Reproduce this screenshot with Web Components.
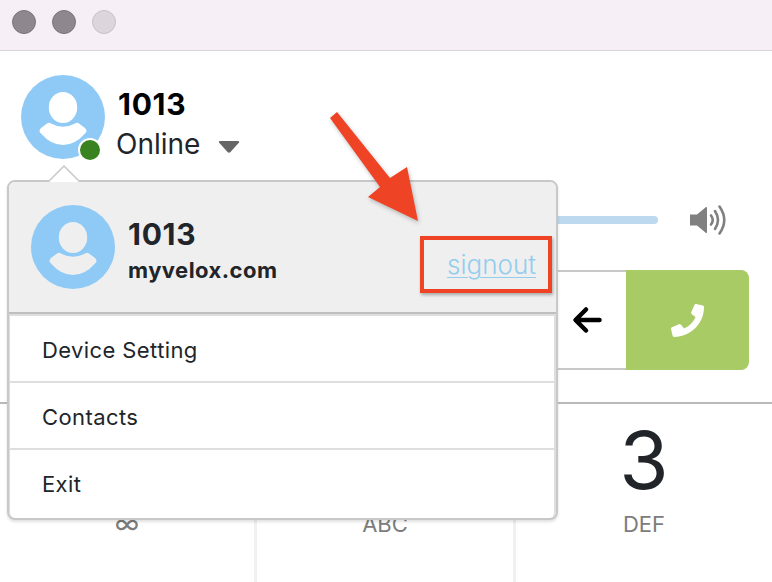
<!DOCTYPE html>
<html lang="en">
<head>
  <meta charset="UTF-8">
  <title>Softphone</title>
  <style>
    html, body { margin: 0; height: 100%; background: #fff; overflow: hidden; }
    body { font-family: Inter, "Liberation Sans", sans-serif; color: #212529; position: relative; }
  </style>
</head>
<body>
  <app-titlebar></app-titlebar>
  <app-status name="1013" state="Online"></app-status>
  <app-volume></app-volume>
  <app-dialbar></app-dialbar>
  <!-- digits 1 and 2 sit behind the open menu, only their letters show -->
  <app-keypad>
    <app-key letters="∞" big></app-key>
    <app-key letters="ABC"></app-key>
    <app-key digit="3" letters="DEF"></app-key>
  </app-keypad>
  <app-usermenu name="1013" domain="myvelox.com">
    <app-menuitem>Device Setting</app-menuitem>
    <app-menuitem>Contacts</app-menuitem>
    <app-menuitem>Exit</app-menuitem>
  </app-usermenu>
  <app-callout></app-callout>

  <script>
    const AVATAR_ICON = (bg, fg) => `
      <svg width="84" height="84" viewBox="0 0 84 84" style="display:block">
        <circle cx="42" cy="42" r="42" fill="${bg}"/>
        <ellipse cx="42" cy="32.5" rx="14.2" ry="15.5" fill="${fg}"/>
        <path d="M20 53 L26 48.5 Q28 47 30 48.5 Q42 55 54 48.5 Q56 47 58 48.5 L64 53 Q67 56 64 58.5 Q54 70 42 70 Q30 70 20 58.5 Q17 56 20 53Z" fill="${fg}"/>
      </svg>`;

    // small helper, every element here is the same: style + markup in an open root
    function define(tag, render) {
      customElements.define(tag, class extends HTMLElement {
        constructor() {
          super();
          this.attachShadow({ mode: 'open' });
        }
        connectedCallback() {
          this.shadowRoot.innerHTML = render(this);
        }
      });
    }

    define('app-titlebar', () => `
      <style>
        :host { display: flex; gap: 16px; align-items: center; box-sizing: border-box; height: 51px;
          padding: 0 0 6px 12px; background: #f6eff6; border-bottom: 1px solid #d9d5d9; }
        i { width: 22px; height: 22px; border-radius: 50%; background: #8f878e; border: 1px solid #7c757c; }
        i.off { background: #dcd6dc; border-color: #c8c3c8; }
      </style>
      <i></i><i></i><i class="off"></i>`);

    define('app-status', (el) => `
      <style>
        :host { display: flex; align-items: flex-start; gap: 13px; height: 109px; box-sizing: border-box; padding: 24px 0 0 21px; }
        .pic { position: relative; width: 84px; height: 84px; }
        .dot { position: absolute; left: 57px; top: 63px; width: 20px; height: 20px; border-radius: 50%;
          background: #38821f; border: 2px solid #fff; }
        .name { font-size: 30px; font-weight: 700; letter-spacing: .7px; color: #000; line-height: 34px; margin-top: 12px; }
        .state { display: flex; align-items: center; gap: 18px; font-size: 28px; line-height: 34px; margin: 6px 0 0 -2px; color: #212529; }
        svg.caret { display: block; margin-top: 5px; }
      </style>
      <div class="pic">${AVATAR_ICON('#8fcaf6', '#fff')}<span class="dot"></span></div>
      <div>
        <div class="name">${el.getAttribute('name')}</div>
        <div class="state">${el.getAttribute('state')}
          <svg class="caret" width="22" height="12" viewBox="0 0 22 12"><path d="M1 1.5 Q0.5 0 2 0 H20 Q21.5 0 21 1.5 L12.5 11 Q11 12.5 9.5 11Z" fill="#666"/></svg>
        </div>
      </div>`);

    define('app-volume', () => `
      <style>
        :host { display: flex; align-items: center; height: 110px; box-sizing: border-box; padding: 10px 0 0 300px; }
        .track { width: 358px; height: 8px; border-radius: 4px; background: #bcd9ef; }
        svg { display: block; margin-left: 32px; }
      </style>
      <div class="track"></div>
      <svg width="37" height="30" viewBox="0 0 37 30">
        <path d="M0 9.5 H7 L16 2 Q17 1.5 17 3 V27 Q17 28.5 16 28 L7 20.5 H0Z" fill="#808080"/>
        <g fill="none" stroke="#808080" stroke-width="2.6" stroke-linecap="round">
          <path d="M21 10.5 Q24.5 15 21 19.5"/>
          <path d="M25 6 Q31 15 25 24"/>
          <path d="M29.5 1.5 Q39 15 29.5 28.5"/>
        </g>
      </svg>`);

    define('app-dialbar', () => `
      <style>
        :host { display: flex; height: 100px; margin: 0 23px 0 300px; }
        .input { flex: 1; display: flex; align-items: center; justify-content: flex-end; padding-right: 24px;
          border-top: 2px solid #c9c9c9; border-bottom: 2px solid #c9c9c9; }
        .call { width: 123px; display: flex; align-items: center; justify-content: center;
          background: #a9cb66; border-radius: 0 8px 8px 0; }
        svg { display: block; }
      </style>
      <div class="input">
        <svg width="30" height="28" viewBox="0 0 30 28"><path d="M27.5 14 H4 M14 3.5 L3.5 14 L14 24.5" fill="none" stroke="#000" stroke-width="4.5" stroke-linecap="round" stroke-linejoin="round"/></svg>
      </div>
      <div class="call">
        <svg width="33" height="33" viewBox="0 0 512 512"><path fill="#fff" d="M493.4 24.6l-104-24c-11.3-2.6-22.9 3.3-27.5 13.9l-48 112c-4.2 9.8-1.4 21.3 6.9 28l60.6 49.6c-36 76.7-98.9 140.5-177.2 177.2l-49.6-60.6c-6.8-8.3-18.2-11.1-28-6.9l-112 48C3.9 366.5-2 378.1.6 389.4l24 104C27.1 504.2 36.7 512 48 512c256.1 0 464-207.5 464-464 0-11.2-7.7-20.9-18.6-23.4z"/></svg>
      </div>`);

    define('app-keypad', () => `
      <style>
        :host { display: grid; grid-template-columns: 257px 259px 1fr; margin-top: 32px; height: 179px;
          border-top: 2px solid #b9b9b9; border-bottom: 4px solid #f1f1f1; }
      </style>
      <slot></slot>`);

    define('app-key', (el) => `
      <style>
        :host { display: flex; flex-direction: column; align-items: center; box-sizing: border-box; padding-top: 14px; border-right: 3px solid #f1f1f1; }
        :host(:last-child) { border-right: 0; }
        b { height: 84px; font-size: 80px; font-weight: 400; line-height: 84px; color: #212529; }
        span { font-size: ${el.hasAttribute('big') ? 26 : 22}px; line-height: 24px; color: #7c7c7c; margin-top: 10px; }
      </style>
      <b>${el.getAttribute('digit') || ''}</b><span>${el.getAttribute('letters')}</span>`);

    define('app-usermenu', (el) => `
      <style>
        :host { position: absolute; left: 7px; top: 180px; width: 551px; box-sizing: border-box;
          border: 2px solid #c8c8c8; border-radius: 8px; background: #fff; box-shadow: 0 2px 3px rgba(0,0,0,.12); }
        .nub { position: absolute; left: 39px; top: -17px; width: 32px; height: 17px; }
        .nub svg { display: block; }
        .head { display: flex; align-items: flex-start; gap: 13px; height: 132px; box-sizing: border-box; padding: 23px 0 0 22px;
          background: #efefef; border-radius: 6px 6px 0 0; border-bottom: 2px solid #bfbfbf; position: relative; }
        .id { font-size: 30px; font-weight: 700; letter-spacing: .7px; line-height: 34px; margin-top: 12px; color: #212529; }
        .dom { font-size: 22px; font-weight: 700; letter-spacing: .45px; line-height: 24px; margin-top: 7px; color: #212529; }
        .out { margin-left: auto; align-self: flex-end; padding: 0 20px 33px 0; font-size: 26px; font-weight: 300; line-height: 28px; color: #93cdee; text-decoration: underline; text-underline-offset: 3px; text-decoration-thickness: 1px; }
        .list { border: solid #dedede; border-width: 2px 2px 0 1px; border-radius: 0 0 6px 6px; }
      </style>
      <div class="nub"><svg width="32" height="17" viewBox="0 0 32 17"><path d="M0 17 L16 1 L32 17" fill="#fff" stroke="#c8c8c8" stroke-width="1.5"/></svg></div>
      <div class="head">
        ${AVATAR_ICON('#8fcaf6', '#efefef')}
        <div>
          <div class="id">${el.getAttribute('name')}</div>
          <div class="dom">${el.getAttribute('domain')}</div>
        </div>
        <a class="out">signout</a>
      </div>
      <div class="list"><slot></slot></div>`);

    define('app-menuitem', () => `
      <style>
        :host { display: block; box-sizing: border-box; height: 67px; padding: 0 0 0 32px; line-height: 68px; font-size: 22px;
          letter-spacing: .4px; color: #212529; border-bottom: 2px solid #dedede; }
        :host(:last-child) { border-bottom: 0; height: 68px; }
      </style>
      <slot></slot>`);

    // annotation added on top of the screenshot
    define('app-callout', () => `
      <style>
        :host { position: absolute; left: 0; top: 0; width: 100%; height: 100%; pointer-events: none; }
        svg { position: absolute; left: 0; top: 0; filter: drop-shadow(1px 2px 2px rgba(0,0,0,.25)); }
        .box { position: absolute; left: 420px; top: 236px; width: 132px; height: 57px; box-sizing: border-box;
          border: 4px solid #ee4324; box-shadow: 1px 2px 3px rgba(0,0,0,.3); }
      </style>
      <svg width="772" height="582" viewBox="0 0 772 582"><polygon points="337,112 390,178 407,167 418,221 368,197 380,187 330,118" fill="#ee4324"/></svg>
      <div class="box"></div>`);
  </script>
</body>
</html>
